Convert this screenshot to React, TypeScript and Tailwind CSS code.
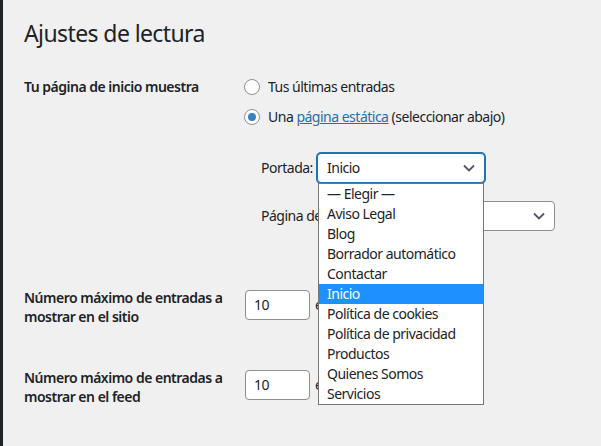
import React from 'react';

const options = [
    '— Elegir —',
    'Aviso Legal',
    'Blog',
    'Borrador automático',
    'Contactar',
    'Inicio',
    'Política de cookies',
    'Política de privacidad',
    'Productos',
    'Quienes Somos',
    'Servicios',
];

function Chevron() {
    return (
        <svg width="20" height="20" viewBox="0 0 20 20" className="shrink-0">
            <path d="M5 7.5l5 5 5-5" fill="none" stroke="#50575e" strokeWidth="1.8" />
        </svg>
    );
}

function Radio({ checked }: { checked?: boolean }) {
    return (
        <span className="flex h-4 w-4 shrink-0 items-center justify-center rounded-full border border-[#8c8f94] bg-white">
            {checked && <span className="h-2 w-2 rounded-full bg-[#3582c4]" />}
        </span>
    );
}

function NumberRow({ lines }: { lines: [string, string] }) {
    return (
        <div className="flex">
            <div className="w-[221px] text-sm font-semibold leading-[19px] whitespace-nowrap">
                {lines[0]}
                <br />
                {lines[1]}
            </div>
            <div className="mt-[2px] flex items-center self-start text-sm">
                <div className="flex h-[30px] w-[65px] items-center rounded border border-[#8c8f94] bg-white pl-2">10</div>
                <span className="ml-[5px]">entradas</span>
            </div>
        </div>
    );
}

export default function App() {
    return (
        <div
            className="flex min-h-[446px] bg-[#f0f0f1] text-[#1d2327] tracking-[-0.5px]"
            style={{ fontFamily: '"Noto Sans", "Open Sans", sans-serif' }}
        >
            <div className="w-[3px] shrink-0 bg-[#1d2327]" />
            <div className="pl-[21px] pt-[18px]">
                <h1 className="text-[23px] leading-[30px] font-normal tracking-[-0.6px]">Ajustes de lectura</h1>

                <div className="mt-[29px] flex">
                    <div className="w-[220px] text-sm font-semibold leading-5">Tu página de inicio muestra</div>
                    <div className="text-sm">
                        <div className="flex h-5 items-center gap-2">
                            <Radio />
                            <span>Tus últimas entradas</span>
                        </div>
                        <div className="mt-[10px] flex h-5 items-center gap-2">
                            <Radio checked />
                            <span>
                                Una <a className="text-[#2271b1] underline">página estática</a> (seleccionar abajo)
                            </span>
                        </div>

                        <div className="mt-[26px] flex items-center pl-[17px]">
                            <span className="w-[56px]">Portada:</span>
                            <div className="relative">
                                <div className="flex h-[30px] w-[168px] items-center justify-between rounded border border-[#2271b1] bg-white pl-[9px] pr-[5px] shadow-[0_0_0_1px_#2271b1]">
                                    <span>Inicio</span>
                                    <Chevron />
                                </div>
                                <ul className="absolute left-[1px] top-full z-10 w-[166px] border border-[#767676] bg-white">
                                    {options.map((o) => (
                                        <li
                                            key={o}
                                            className={
                                                o === 'Inicio'
                                                    ? 'h-5 bg-[#1e90ff] pl-[8px] leading-5 text-white'
                                                    : 'h-5 pl-[8px] leading-5 text-[#1d2327]'
                                            }
                                        >
                                            {o}
                                        </li>
                                    ))}
                                </ul>
                            </div>
                        </div>

                        <div className="mt-[18px] flex items-center pl-[17px]">
                            <span className="w-[126px] whitespace-nowrap">Página de entradas:</span>
                            <div className="flex h-[30px] w-[168px] items-center justify-end rounded border border-[#8c8f94] bg-white pr-[5px]">
                                <Chevron />
                            </div>
                        </div>
                    </div>
                </div>

                <div className="mt-[57px]">
                    <NumberRow lines={['Número máximo de entradas a', 'mostrar en el sitio']} />
                </div>
                <div className="mt-[42px]">
                    <NumberRow lines={['Número máximo de entradas a', 'mostrar en el feed']} />
                </div>
            </div>
        </div>
    );
}
